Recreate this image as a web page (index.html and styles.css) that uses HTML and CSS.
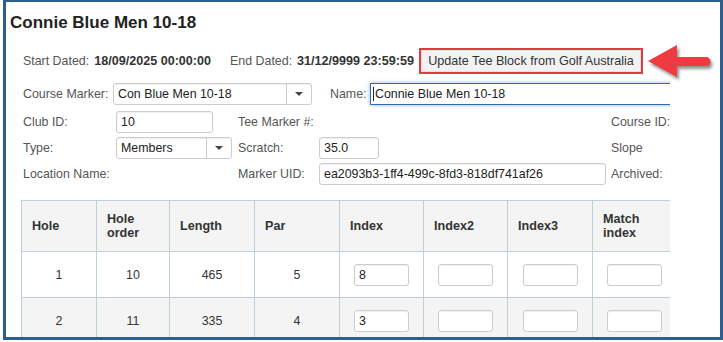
FILE: index.html
```html
<!DOCTYPE html>
<html lang="en">
<head>
    <meta charset="UTF-8">
    <meta name="viewport" content="width=device-width, initial-scale=1.0">
    <title>Tee Marker</title>
    <link rel="stylesheet" href="styles.css">
</head>
<body>
    <div class="frame">
        <h1>Connie Blue Men 10-18</h1>

        <div class="sheet">
            <!-- Dates and update action -->
            <div class="dates">
                <span class="lbl">Start Dated:</span>
                <b class="val">18/09/2025 00:00:00</b>
                <span class="lbl end-lbl">End Dated:</span>
                <b class="val">31/12/9999 23:59:59</b>
                <div class="highlight">
                    <button class="btn-update">Update Tee Block from Golf Australia</button>
                </div>
            </div>

            <div class="marker-row">
                <span class="lbl">Course Marker:</span>
                <div class="select sel-marker">
                    <span class="sel-text">Con Blue Men 10-18</span>
                    <span class="sel-arrow"></span>
                </div>
                <span class="lbl name-lbl">Name:</span>
                <div class="input input-name focused"><span class="caret"></span>Connie Blue Men 10-18</div>
            </div>

            <div class="info">
                <span class="lbl">Club ID:</span>
                <div><div class="input input-club">10</div></div>
                <span class="lbl">Tee Marker #:</span>
                <div></div>
                <span class="lbl">Course ID:</span>

                <span class="lbl">Type:</span>
                <div>
                    <div class="select sel-type">
                        <span class="sel-text">Members</span>
                        <span class="sel-arrow"></span>
                    </div>
                </div>
                <span class="lbl">Scratch:</span>
                <div><div class="input input-scratch">35.0</div></div>
                <span class="lbl">Slope</span>

                <span class="lbl">Location Name:</span>
                <div></div>
                <span class="lbl">Marker UID:</span>
                <div><div class="input input-uid">ea2093b3-1ff4-499c-8fd3-818df741af26</div></div>
                <span class="lbl">Archived:</span>
            </div>

            <table class="holes">
                <colgroup>
                    <col style="width: 75px">
                    <col style="width: 73px">
                    <col style="width: 85px">
                    <col style="width: 85px">
                    <col style="width: 84px">
                    <col style="width: 84px">
                    <col style="width: 85px">
                    <col style="width: 84px">
                </colgroup>
                <thead>
                    <tr>
                        <th>Hole</th>
                        <th>Hole order</th>
                        <th>Length</th>
                        <th>Par</th>
                        <th>Index</th>
                        <th>Index2</th>
                        <th>Index3</th>
                        <th>Match index</th>
                    </tr>
                </thead>
                <tbody>
                    <tr>
                        <td>1</td>
                        <td>10</td>
                        <td>465</td>
                        <td>5</td>
                        <td><div class="cell-input">8</div></td>
                        <td><div class="cell-input"></div></td>
                        <td><div class="cell-input"></div></td>
                        <td><div class="cell-input"></div></td>
                    </tr>
                    <tr>
                        <td>2</td>
                        <td>11</td>
                        <td>335</td>
                        <td>4</td>
                        <td><div class="cell-input">3</div></td>
                        <td><div class="cell-input"></div></td>
                        <td><div class="cell-input"></div></td>
                        <td><div class="cell-input"></div></td>
                    </tr>
                </tbody>
            </table>
        </div>

        <!-- annotation arrow pointing at the button -->
        <svg class="arrow" width="72" height="46" viewBox="0 0 72 46">
            <defs>
                <filter id="sh" x="-20%" y="-20%" width="150%" height="160%">
                    <feGaussianBlur stdDeviation="1.6"/>
                </filter>
            </defs>
            <g transform="translate(2,3)" filter="url(#sh)" fill="#3a3a3a" opacity="0.55">
                <path d="M3 20 L32 4 L32 16 L61 16 A4.5 4.5 0 0 1 61 25 L32 25 L32 36 Z"/>
            </g>
            <path d="M3 20 L32 4 L32 16 L61 16 A4.5 4.5 0 0 1 61 25 L32 25 L32 36 Z" fill="#ee3a40"/>
        </svg>
    </div>
</body>
</html>
```

FILE: styles.css
```css
body {
    margin: 0;
    padding: 0;
    font-family: "Liberation Sans", Arial, sans-serif;
    background: #fff;
    color: #333;
}

.frame {
    position: relative;
    margin-left: 3px;
    width: 714px;
    height: 335px;
    border: 3px solid #2d5e8c;
    border-top-width: 2px;
    overflow: hidden;
    background: #fff;
}

h1 {
    margin: 0;
    padding: 11px 0 0 4px;
    font-size: 17px;
    line-height: 20px;
    font-weight: bold;
    color: #222;
}

.sheet {
    margin-left: 15px;
    width: 649px;
    overflow: hidden;
    font-size: 12.4px;
}

.lbl {
    color: #555;
    white-space: nowrap;
}

/* Dates row */
.dates {
    display: flex;
    align-items: center;
    height: 26px;
    margin-top: 15px;
    padding-left: 2px;
}

.val {
    margin-left: 5px;
    font-size: 12.6px;
    color: #333;
}

.end-lbl {
    margin-left: 19px;
}

.highlight {
    margin-left: 5px;
    border: 2px solid #e53a40;
}

.btn-update {
    display: block;
    width: 220px;
    height: 22px;
    padding: 0;
    font-family: inherit;
    font-size: 12.6px;
    color: #333;
    background: #f2f2f2;
    border: 1px solid #e2e2e2;
}

/* Inputs and selects */
.input, .select, .cell-input {
    box-sizing: border-box;
    height: 22px;
    line-height: 20px;
    border: 1px solid #ccc;
    border-radius: 3px;
    background: #fff;
    color: #222;
    white-space: nowrap;
    overflow: hidden;
    box-shadow: inset 0 1px 1px rgba(0, 0, 0, 0.06);
}

.input {
    padding-left: 4px;
}

.select {
    display: flex;
}

.sel-text {
    flex: 1;
    padding-left: 4px;
}

.sel-arrow {
    width: 24px;
    border-left: 1px solid #ccc;
    display: flex;
    align-items: center;
    justify-content: center;
}

.sel-arrow::after {
    content: "";
    border-left: 4px solid transparent;
    border-right: 4px solid transparent;
    border-top: 4px solid #444;
}

.marker-row {
    display: grid;
    grid-template-columns: 90px 199px 58px 310px;
    align-items: center;
    height: 22px;
    margin-top: 9px;
    padding-left: 2px;
}

.name-lbl {
    padding-left: 18px;
}

.input-name {
    width: 310px;
    border-radius: 0;
    border-color: #2f6db0;
    box-shadow: 0 0 4px rgba(60, 130, 210, 0.6);
    padding-left: 2px;
}

.caret {
    display: inline-block;
    width: 1px;
    height: 14px;
    margin-right: 1px;
    vertical-align: -3px;
    background: #222;
}

.info {
    display: grid;
    grid-template-columns: 93px 122px 81px 292px 1fr;
    grid-auto-rows: 22px;
    row-gap: 4px;
    align-items: center;
    margin-top: 6px;
    padding-left: 2px;
}

.input-club {
    width: 97px;
}

.sel-type {
    width: 116px;
}

.input-scratch {
    width: 60px;
}

.input-uid {
    width: 287px;
}

/* Holes table */
.holes {
    margin-top: 15px;
    border-collapse: collapse;
    table-layout: fixed;
    width: 655px;
}

.holes th, .holes td {
    border: 1px solid #bcd0dc;
}

.holes th {
    height: 50px;
    padding: 0 10px;
    background: #f4f4f4;
    font-size: 12.6px;
    line-height: 14px;
    text-align: left;
    color: #333;
}

.holes td {
    height: 45px;
    padding: 0;
    text-align: center;
    font-size: 12.4px;
    color: #333;
}

.holes tbody tr:nth-child(even) {
    background: #f4f4f4;
}

.cell-input {
    width: 55px;
    margin: 0 auto;
    text-align: left;
    padding-left: 4px;
}

.arrow {
    position: absolute;
    left: 639px;
    top: 39px;
}
```
